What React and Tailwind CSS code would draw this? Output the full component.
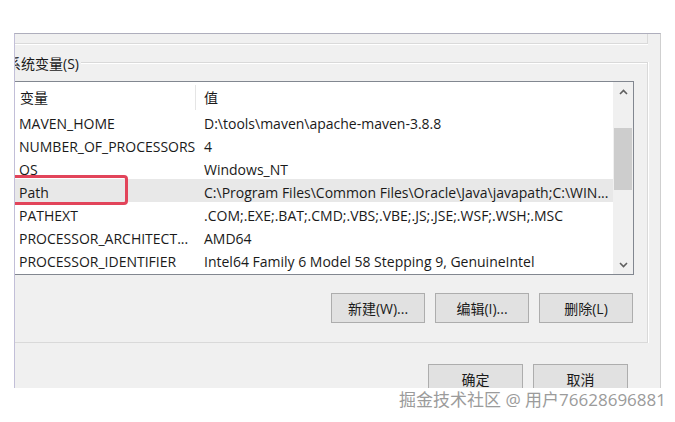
import React from 'react';

const FONT = {fontFamily: '"Open Sans", "Noto Sans CJK SC", sans-serif'};

const ROWS = [
  ['MAVEN_HOME', 'D:\\tools\\maven\\apache-maven-3.8.8'],
  ['NUMBER_OF_PROCESSORS', '4'],
  ['OS', 'Windows_NT'],
  ['Path', 'C:\\Program Files\\Common Files\\Oracle\\Java\\javapath;C:\\WIN...'],
  ['PATHEXT', '.COM;.EXE;.BAT;.CMD;.VBS;.VBE;.JS;.JSE;.WSF;.WSH;.MSC'],
  ['PROCESSOR_ARCHITECT...', 'AMD64'],
  ['PROCESSOR_IDENTIFIER', 'Intel64 Family 6 Model 58 Stepping 9, GenuineIntel'],
];

function Chevron({down}) {
  return (
    <svg width="9" height="6" viewBox="0 0 9 6" className={down ? 'rotate-180' : ''}>
      <path d="M1 5 L4.5 1.5 L8 5" fill="none" stroke="#5f5f5f" strokeWidth="1.6"/>
    </svg>
  );
}

function WinButton({label, wide}) {
  return (
    <div className={`${wide ? 'w-[95px]' : 'w-[94px]'} h-[30px] shrink-0 bg-[#e1e1e1] border border-[#adadad] flex items-center justify-center text-[14px] text-[#1a1a1a]`}>
      {label}
    </div>
  );
}

function VarRow({name, value, selected}) {
  return (
    <div className={`relative h-[23px] pt-[3px] flex items-center ${selected ? 'bg-[#e8e8e8]' : ''}`}>
      <div className="w-[182px] pl-[5px] whitespace-nowrap">{name}</div>
      <div className="pl-[8px] whitespace-nowrap">{value}</div>
      {selected && <div className="absolute -top-[4px] -bottom-[3px] -left-[12px] w-[126px] border-[3px] border-[#e2445a] rounded-[4px]"/>}
    </div>
  );
}

export default function App() {
  return (
    <div className="w-[675px] h-[422px] bg-white overflow-hidden pt-[33px] pl-[14px]" style={FONT}>
      <div className="w-[647px] h-[355px] bg-[#f0f0f0] border-t border-l border-r border-t-[#aeaebc] border-l-[#c2bfd8] border-r-[#cfcfcf] overflow-hidden">
        {/* upper group remnant */}
        <div className="w-[633px] h-[10px] border-r border-b border-[#dadada] shadow-[0_1px_0_#fff]"/>

        {/* system variables group */}
        <div className="mt-[18px] w-[633px] h-[281px] border-t border-r border-b border-[#d9d9d9] shadow-[inset_0_1px_0_#fff,1px_0_0_#fff] flex flex-col">
          <span className="-mt-[8px] -ml-[8px] self-start bg-[#f0f0f0] pr-[2px] text-[14px] leading-[18px] text-[#1a1a1a]">系统变量(S)</span>

          <div className="mt-[8px] -ml-[2px] w-[621px] h-[194px] bg-white border border-[#828790] flex text-[14px] text-[#1a1a1a]">
            <div className="flex-1 flex flex-col">
              <div className="h-[28px] pt-[3px] flex items-center">
                <div className="w-[182px] h-full pl-[6px] flex items-center border-r border-[#e5e5e5]">变量</div>
                <div className="pl-[8px]">值</div>
              </div>
              {ROWS.map(([n, v]) => (
                <VarRow key={n} name={n} value={v} selected={n === 'Path'}/>
              ))}
            </div>
            <div className="w-[20px] bg-[#f0f0f0] flex flex-col items-center">
              <div className="h-[19px] flex items-center justify-center"><Chevron/></div>
              <div className="flex-1 w-full px-[1px] pt-[27px]">
                <div className="h-[62px] bg-[#cdcdcd]"/>
              </div>
              <div className="h-[19px] flex items-center justify-center"><Chevron down/></div>
            </div>
          </div>

          <div className="mt-[18px] flex justify-end gap-[10px] pr-[14px]">
            <WinButton label="新建(W)..."/>
            <WinButton label="编辑(I)..."/>
            <WinButton label="删除(L)"/>
          </div>
        </div>

        <div className="mt-[21px] flex justify-end gap-[10px] pr-[32px]">
          <WinButton label="确定" wide/>
          <WinButton label="取消" wide/>
        </div>
      </div>
      <div className="mt-[2px] w-[652px] text-right text-[17px] leading-[20px] text-[#9b9b9b]">
        掘金技术社区 @ 用户76628696881
      </div>
    </div>
  );
}
